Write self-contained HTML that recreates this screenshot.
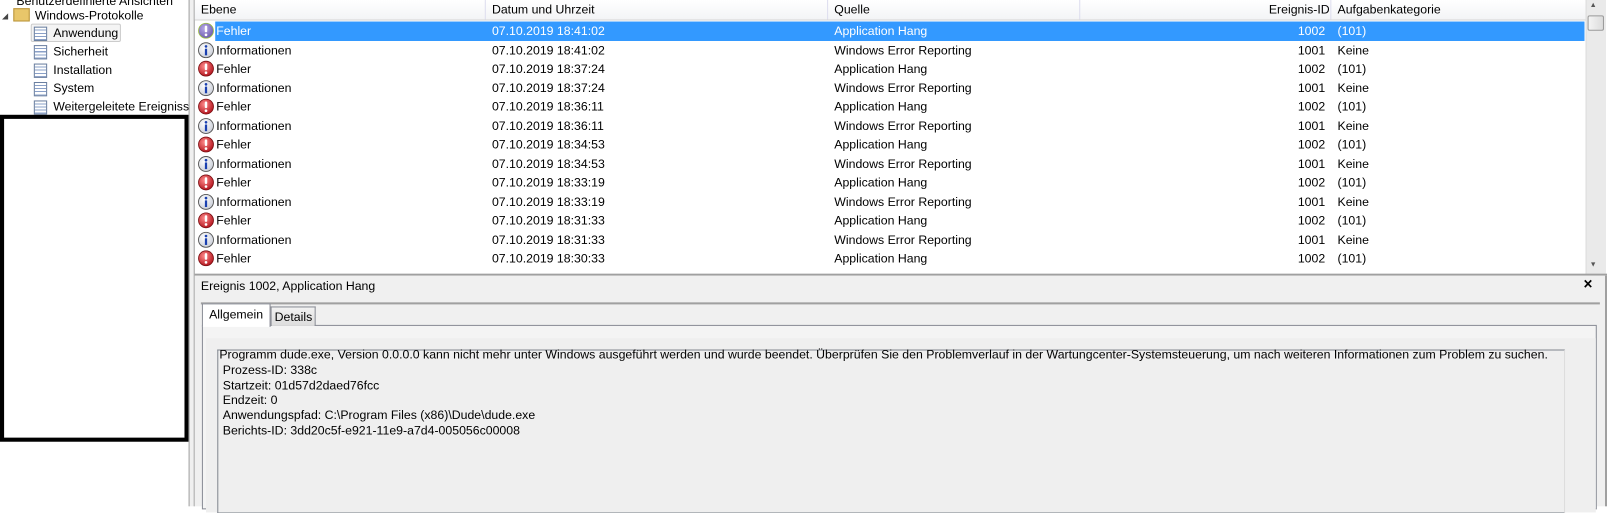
<!DOCTYPE html>
<html><head><meta charset="utf-8"><style>
*{margin:0;padding:0;box-sizing:border-box}
body{width:1607px;height:494px;overflow:hidden;background:#fff;font-family:"Liberation Sans",sans-serif;font-size:12px;color:#000;position:relative}
#w{position:absolute;left:0;top:0;width:1568px;height:482px;transform:scale(1.0249);transform-origin:0 0}
.a{position:absolute;white-space:nowrap}
.row{position:absolute;left:190px;width:1356px;height:18.5px}
.row span{position:absolute;top:2px}
.sel{background:#3399ff;color:#fff}
.ic{position:absolute;left:3px;top:1px;width:16px;height:16px}
</style></head><body><div id="w">
<div class="a" style="left:0;top:0;width:184px;height:112px;background:#fff;overflow:hidden">
 <div class="a" style="left:16px;top:-6px;color:#000">Benutzerdefinierte Ansichten</div>
 <div class="a" style="left:2px;top:11px;font-size:8px;color:#444">◢</div>
 <div class="a" style="left:13px;top:8px;width:16px;height:13px;background:#e8c66a;border:1px solid #b8933a"></div>
 <div class="a" style="left:34px;top:8px">Windows-Protokolle</div>
 <div class="a" style="left:30px;top:23px;width:88px;height:18px;border:1px solid #ccc;border-radius:2px;background:#f4f4f4"></div>
 <div class="a" style="left:52px;top:25px">Anwendung</div>
 <div class="a" style="left:52px;top:43px">Sicherheit</div>
 <div class="a" style="left:52px;top:61px">Installation</div>
 <div class="a" style="left:52px;top:79px">System</div>
 <div class="a" style="left:52px;top:97px">Weitergeleitete Ereignisse</div>
 <div class="a" style="left:33px;top:26px;width:13px;height:14px;border:1px solid #6a7fa0;background:repeating-linear-gradient(#fff 0 2px,#8aa0c8 2px 3px)"></div>
 <div class="a" style="left:33px;top:44px;width:13px;height:14px;border:1px solid #6a7fa0;background:repeating-linear-gradient(#fff 0 2px,#8aa0c8 2px 3px)"></div>
 <div class="a" style="left:33px;top:62px;width:13px;height:14px;border:1px solid #6a7fa0;background:repeating-linear-gradient(#fff 0 2px,#8aa0c8 2px 3px)"></div>
 <div class="a" style="left:33px;top:80px;width:13px;height:14px;border:1px solid #6a7fa0;background:repeating-linear-gradient(#fff 0 2px,#8aa0c8 2px 3px)"></div>
 <div class="a" style="left:33px;top:98px;width:13px;height:14px;border:1px solid #6a7fa0;background:repeating-linear-gradient(#fff 0 2px,#8aa0c8 2px 3px)"></div>
</div>
<div class="a" style="left:0;top:112px;width:184px;height:319px;border:4px solid #000;background:#fff"></div>
<div class="a" style="left:184px;top:0;width:6px;height:494px;background:#f0f0f0;border-left:1px solid #a0a0a0;border-right:1px solid #a0a0a0"></div>
<div class="a" style="left:190px;top:0;width:1358px;height:20px;background:linear-gradient(#fff,#f3f4f6);border-bottom:1px solid #d5d5d5"></div>
<div class="a" style="left:196px;top:2px">Ebene</div>
<div class="a" style="left:473px;top:0;width:1px;height:19px;background:#dde"></div>
<div class="a" style="left:480px;top:2px">Datum und Uhrzeit</div>
<div class="a" style="left:807px;top:0;width:1px;height:19px;background:#dde"></div>
<div class="a" style="left:814px;top:2px">Quelle</div>
<div class="a" style="left:1053px;top:0;width:1px;height:19px;background:#dde"></div>
<div class="a" style="left:1238px;top:2px">Ereignis-ID</div>
<div class="a" style="left:1298px;top:0;width:1px;height:19px;background:#dde"></div>
<div class="a" style="left:1305px;top:2px">Aufgabenkategorie</div>
<div id="rows"></div>
<svg width="0" height="0" style="position:absolute"><defs>
<radialGradient id="rg" cx="40%" cy="35%" r="70%"><stop offset="0" stop-color="#ff8a8a"/><stop offset="1" stop-color="#b0101a"/></radialGradient>
<radialGradient id="bg" cx="40%" cy="35%" r="70%"><stop offset="0" stop-color="#fff"/><stop offset="1" stop-color="#c8ccd6"/></radialGradient>
<radialGradient id="pg" cx="40%" cy="35%" r="70%"><stop offset="0" stop-color="#b7a8e8"/><stop offset="1" stop-color="#6a5aa8"/></radialGradient>
</defs></svg>
<script>
var times=["18:41:02","18:41:02","18:37:24","18:37:24","18:36:11","18:36:11","18:34:53","18:34:53","18:33:19","18:33:19","18:31:33","18:31:33","18:30:33"];
var h="";
times.forEach(function(t,i){
 var err=i%2==0, top=21+i*18.5, sel=i==0, c=sel?';color:#fff':'';
 var icon=err?'<svg class="ic" viewBox="0 0 16 16"><circle cx="8" cy="8" r="7.3" fill="url(#'+(sel?'pg':'rg')+')" stroke="'+(sel?'#9bbf40':'#7a0d10')+'" stroke-width=".8"/><rect x="6.8" y="3" width="2.4" height="6.5" rx="1" fill="#fff"/><circle cx="8" cy="12" r="1.3" fill="#fff"/></svg>'
 :'<svg class="ic" viewBox="0 0 16 16"><circle cx="8" cy="8" r="7.3" fill="url(#bg)" stroke="#555" stroke-width=".9"/><circle cx="8" cy="4.3" r="1.3" fill="#1a40b0"/><rect x="6.9" y="6.5" width="2.2" height="6.5" fill="#1a40b0"/></svg>';
 h+='<div class="row" style="top:'+top+'px">'+(sel?'<div class="sel" style="position:absolute;left:20px;right:0;top:0;height:18.5px"></div>':'')+icon+
 '<span style="left:21px'+c+'">'+(err?'Fehler':'Informationen')+'</span>'+
 '<span style="left:290px'+c+'">07.10.2019 '+t+'</span>'+
 '<span style="left:624px'+c+'">'+(err?'Application Hang':'Windows Error Reporting')+'</span>'+
 '<span style="right:253px'+c+'">'+(err?'1002':'1001')+'</span>'+
 '<span style="left:1115px'+c+'">'+(err?'(101)':'Keine')+'</span></div>';
});
document.getElementById('rows').innerHTML=h;
</script>
<div class="a" style="left:1547px;top:0;width:20px;height:268px;background:#eaeaea;border-left:1px solid #ddd"></div>
<div class="a" style="left:1551px;top:2px;font-size:7px;color:#555">▲</div>
<div class="a" style="left:1549px;top:15px;width:16px;height:15px;background:linear-gradient(90deg,#f4f4f4,#dcdcdc);border:1px solid #999;border-radius:2px"></div>
<div class="a" style="left:1551px;top:255px;font-size:7px;color:#555">▼</div>
<div class="a" style="left:190px;top:267px;width:1378px;height:2px;background:#a0a0a0"></div>
<div class="a" style="left:190px;top:269px;width:1378px;height:225px;background:#f0f0f0"></div>
<div class="a" style="left:1566px;top:269px;width:2px;height:225px;background:#a0a0a0"></div>
<div class="a" style="left:196px;top:272px">Ereignis 1002, Application Hang</div>
<div class="a" style="left:1545px;top:269px;font-size:15px;font-weight:bold">×</div>
<div class="a" style="left:196px;top:295px;width:1365px;height:2px;background:#a0a0a0"></div>
<div class="a" style="left:197px;top:317px;width:1361px;height:180px;border:1px solid #898c95;background:#f4f4f4"></div>
<div class="a" style="left:201px;top:330px;width:1356px;height:170px;background:#efefef"></div>
<div class="a" style="left:197px;top:296px;width:67px;height:23px;border:1px solid #898c95;border-bottom:none;background:#fff"></div>
<div class="a" style="left:204px;top:300px">Allgemein</div>
<div class="a" style="left:264px;top:299px;width:44px;height:19px;border:1px solid #898c95;border-bottom:none;background:linear-gradient(#f2f2f2,#dcdcdc)"></div>
<div class="a" style="left:268px;top:302px">Details</div>
<div class="a" style="left:212px;top:341px;width:1315px;height:160px;border:1px solid #828790;border-right-color:#ddd;background:#efefef"></div>
<div class="a" style="left:214px;top:339px;line-height:14.8px;font-size:12px">Programm dude.exe, Version 0.0.0.0 kann nicht mehr unter Windows ausgeführt werden und wurde beendet. Überprüfen Sie den Problemverlauf in der Wartungcenter-Systemsteuerung, um nach weiteren Informationen zum Problem zu suchen.<br>&nbsp;Prozess-ID: 338c<br>&nbsp;Startzeit: 01d57d2daed76fcc<br>&nbsp;Endzeit: 0<br>&nbsp;Anwendungspfad: C:\Program Files (x86)\Dude\dude.exe<br>&nbsp;Berichts-ID: 3dd20c5f-e921-11e9-a7d4-005056c00008</div>
</div></body></html>
